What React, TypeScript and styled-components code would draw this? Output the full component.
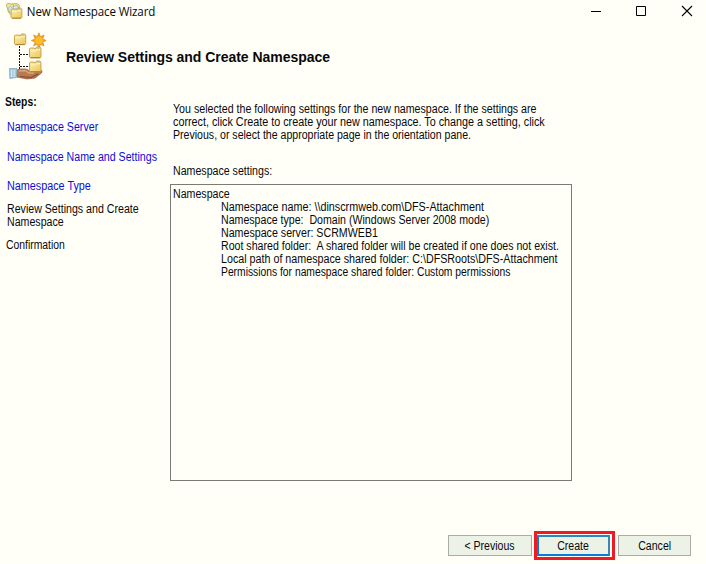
import React from "react";
import styled, { createGlobalStyle } from "styled-components";

const GlobalStyle = createGlobalStyle`
  html, body { margin: 0; padding: 0; background: #fffff8; }
  * { box-sizing: border-box; }
`;

const Window = styled.main`
  width: 706px;
  height: 564px;
  overflow: hidden;
  display: flex;
  flex-direction: column;
  background: #fffff8;
  color: #08080c;
  font: 12px/13px "Liberation Sans", Arial, sans-serif;
`;

const TitleBar = styled.div`
  height: 24px;
  flex: none;
  display: flex;
  align-items: flex-start;
  padding-left: 5px;
`;

const WindowTitle = styled.div`
  flex: 1;
  padding: 4px 0 0 4px;
  font: 12px/16px "Open Sans", "Noto Sans", sans-serif;
  letter-spacing: -0.12px;
  white-space: nowrap;
  transform: scaleX(0.963);
  transform-origin: 0 50%;
`;

const Controls = styled.div`
  display: flex;
  gap: 34px;
  padding: 5px 13px 0 0;
`;

const Banner = styled.header`
  height: 72px;
  flex: none;
  display: flex;
  padding: 7px 0 0 7px;
`;

const Heading = styled.h1`
  margin: 18px 0 0 19px;
  font: bold 14px/17px "Liberation Sans", Arial, sans-serif;
  letter-spacing: -0.04px;
  white-space: nowrap;
`;

const Body = styled.div`
  flex: 1;
  display: flex;
`;

const Steps = styled.nav`
  width: 170px;
  flex: none;
  display: flex;
  flex-direction: column;
`;

const Label = styled.div`
  padding-left: 5px;
  font-weight: bold;
`;

const Step = styled.div<{ $gap: number; $link?: boolean; $left?: number }>`
  margin-top: ${(p) => p.$gap}px;
  padding-left: ${(p) => p.$left ?? 7}px;
  color: ${(p) => (p.$link ? "#0c0cdc" : "inherit")};
`;

const Line = styled.div<{ $narrow?: number; $indent?: number }>`
  width: max-content;
  height: 13px;
  margin-left: ${(p) => p.$indent ?? 0}px;
  white-space: pre;
  transform: scaleX(${(p) => p.$narrow ?? 0.885});
  transform-origin: 0 50%;
`;

const Content = styled.section`
  width: 402px;
  display: flex;
  flex-direction: column;
`;

const Intro = styled.div`
  padding: 7px 0 0 3px;
`;

const Caption = styled.div`
  padding: 23px 0 0 3px;
`;

const SettingsBox = styled.div`
  height: 297px;
  margin-top: 6px;
  padding: 3px 2px;
  border: 1px solid #7b7b76;
`;

const Footer = styled.footer`
  height: 33px;
  flex: none;
  display: flex;
  justify-content: flex-end;
  align-items: flex-start;
  padding-right: 15px;
`;

const Button = styled.button<{ $width: number }>`
  width: ${(p) => p.$width}px;
  height: 21px;
  margin-top: 4px;
  padding: 2px 0 0;
  display: flex;
  align-items: center;
  justify-content: center;
  border: 1px solid #a9ada3;
  background: #edf2e7;
  color: inherit;
  font: 12px/13px "Liberation Sans", Arial, sans-serif;
`;

const ButtonText = styled.span`
  height: 13px;
  white-space: nowrap;
  transform: scaleX(0.88);
`;

const PrimaryButton = styled(Button)`
  margin: 0;
  border: 2px solid #0a7bd8;
  border-right-color: #3a87b4;
  border-top-color: #2f86bd;
`;

const Highlight = styled.div`
  margin: 0 3px 0 2px;
  height: 29px;
  border: 3px solid #ed1c24;
  padding: 1px 2px 1px 0;
  display: flex;
`;

const Folder = ({ x, y, s = 1 }: { x: number; y: number; s?: number }) => (
  <g transform={`translate(${x} ${y}) scale(${s})`}>
    <path d="M0.5 2.2 L1.2 1.5 H5 L6 2.5 L7.2 .5 H10.5 L11.5 1.8 V10 L10.5 11 H1.5 L.5 10Z" fill="url(#folder)" stroke="#c49f45" strokeWidth=".9" />
    <path d="M1.5 4.4 H5.5 L7 3.2 H10.6" fill="none" stroke="#fff6c4" strokeWidth="1" />
    <path d="M7.5 1.6 H10" stroke="#8fb7b0" strokeWidth=".8" />
    <path d="M1.3 10.7 H10.7" stroke="#a9802f" strokeWidth=".9" />
  </g>
);

const FolderGradient = () => (
  <defs>
    <linearGradient id="folder" x1="0" y1="0" x2="1" y2="1">
      <stop offset="0" stopColor="#fcefac" />
      <stop offset="1" stopColor="#ecc75c" />
    </linearGradient>
  </defs>
);

const AppIcon = () => (
  <svg width="18" height="20" viewBox="0 0 18 20">
    <FolderGradient />
    <path d="M1.3 4.6 L2.3 3.6 H5 L6 4.3 L8 3.4 L9 5 V12 L5.5 14.5 L3.6 12.5Z" fill="#f7e49c" stroke="#c9a650" strokeWidth=".9" />
    <path d="M8 4.5 L9 3.7 H12.5 L14.2 5 V9 H9Z" fill="#f7e49c" stroke="#c9a650" strokeWidth=".9" />
    <path d="M3.6 7.5 L5.5 6.2 L7.5 9 L6.2 14.8 L4.6 13.2Z" fill="#d5eef0" stroke="#7bb4bd" strokeWidth=".7" />
    <path d="M8 6.5 L12 5.4 L13.6 8.5 L8.5 9.5Z" fill="#d5eef0" stroke="#7bb4bd" strokeWidth=".7" />
    <Folder x={5.6} y={7.6} s={0.98} />
  </svg>
);

const NamespaceIcon = () => (
  <svg width="40" height="50" viewBox="0 0 40 50">
    <FolderGradient />
    <path d="M12.5 15 V42 M13 23.5 H23 M13 35.5 H23" fill="none" stroke="#111" strokeDasharray="2 1" />
    <path
      transform="translate(3.2 .95) scale(.9)"
      d="M32 1 L33.6 5.2 L37.6 3.4 L36.1 7.7 L40 9.5 L36.1 11.2 L37.6 15.4 L33.6 13.8 L32 18 L30 13.8 L26 15.4 L27.8 11.2 L23.5 9.5 L27.8 7.7 L26 3.4 L30 5.2Z"
      fill="#f2a41c"
      stroke="#dc8e15"
      strokeWidth=".8"
    />
    <circle cx="32" cy="9.5" r="3.8" fill="#fbbd2b" />
    <Folder x={7} y={2.5} s={1.02} />
    <Folder x={22} y={15.5} s={1.04} />
    <path d="M9 39 L14 38 H19 L23 40 L31 41 L35 39.5 L34.5 42 L28 47 L20 48 L10 46Z" fill="#b77a53" stroke="#8c5436" strokeWidth=".7" />
    <path d="M12 40 L18 39.5 L22 42 H27" fill="none" stroke="#dfa881" strokeWidth="1.3" />
    <path d="M13 45.5 L24 46.5 L31 43" fill="none" stroke="#87492f" strokeWidth="1.2" />
    <path d="M2.5 37.5 L10 37.5 L9.5 46.5 L2.8 47.5Z" fill="#a8cbdc" stroke="#7aa2b8" strokeWidth=".7" />
    <path d="M4.5 39 L4.4 46 M7.2 39 L7 46" stroke="#d8ebf3" strokeWidth="1" />
    <Folder x={22} y={29.5} s={1.04} />
  </svg>
);

const settings: [string, number][] = [
  ["Namespace name: \\\\dinscrmweb.com\\DFS-Attachment", 0.898],
  ["Namespace type:  Domain (Windows Server 2008 mode)", 0.884],
  ["Namespace server: SCRMWEB1", 0.888],
  ["Root shared folder:  A shared folder will be created if one does not exist.", 0.884],
  ["Local path of namespace shared folder: C:\\DFSRoots\\DFS-Attachment", 0.893],
  ["Permissions for namespace shared folder: Custom permissions", 0.859],
];

export default function App() {
  return (
    <Window>
      <GlobalStyle />
      <TitleBar>
        <AppIcon />
        <WindowTitle>New Namespace Wizard</WindowTitle>
        <Controls>
          <svg width="12" height="12"><path d="M2 6.5H12" stroke="#000" /></svg>
          <svg width="12" height="12"><path d="M1.5 1.5H10.5V10.5H1.5Z" fill="none" stroke="#000" /></svg>
          <svg width="12" height="12"><path d="M1 1L11 11M11 1L1 11" stroke="#000" strokeWidth="1.1" /></svg>
        </Controls>
      </TitleBar>
      <Banner>
        <NamespaceIcon />
        <Heading>Review Settings and Create Namespace</Heading>
      </Banner>
      <Body>
        <Steps>
          <Label><Line $narrow={0.863}>Steps:</Line></Label>
          <Step $gap={12} $link><Line $narrow={0.888}>Namespace Server</Line></Step>
          <Step $gap={17} $link><Line>Namespace Name and Settings</Line></Step>
          <Step $gap={16} $link><Line $narrow={0.9}>Namespace Type</Line></Step>
          <Step $gap={10}>
            <Line>Review Settings and Create</Line>
            <Line>Namespace</Line>
          </Step>
          <Step $gap={10} $left={6}><Line $narrow={0.865}>Confirmation</Line></Step>
        </Steps>
        <Content>
          <Intro>
            <Line $narrow={0.887}>You selected the following settings for the new namespace. If the settings are</Line>
            <Line $narrow={0.898}>correct, click Create to create your new namespace. To change a setting, click</Line>
            <Line $narrow={0.881}>Previous, or select the appropriate page in the orientation pane.</Line>
          </Intro>
          <Caption><Line>Namespace settings:</Line></Caption>
          <SettingsBox>
            <Line>Namespace</Line>
            {settings.map(([text, narrow]) => (
              <Line key={text} $indent={48} $narrow={narrow}>{text}</Line>
            ))}
          </SettingsBox>
        </Content>
      </Body>
      <Footer>
        <Button $width={84}><ButtonText>&lt; Previous</ButtonText></Button>
        <Highlight>
          <PrimaryButton $width={73}><ButtonText>Create</ButtonText></PrimaryButton>
        </Highlight>
        <Button $width={73}><ButtonText>Cancel</ButtonText></Button>
      </Footer>
    </Window>
  );
}
